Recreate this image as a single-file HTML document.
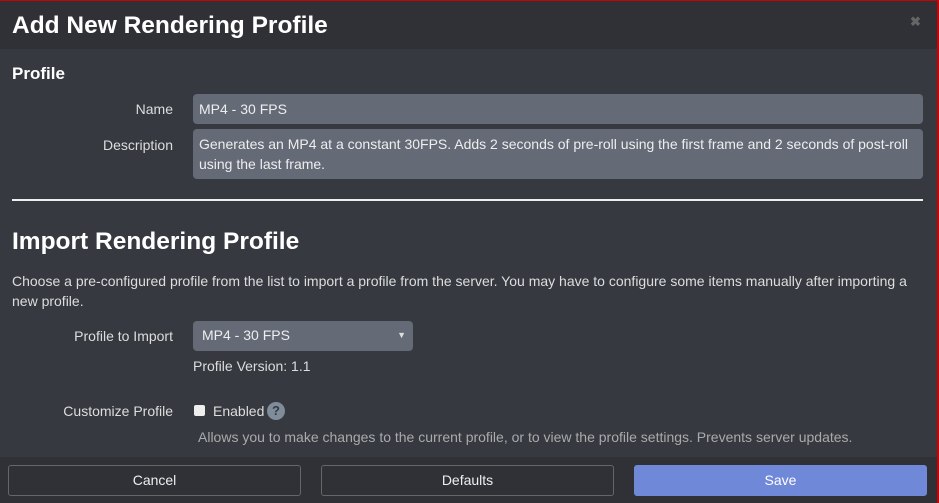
<!DOCTYPE html>
<html><head><style>
*{box-sizing:border-box;margin:0;padding:0}
body{width:939px;height:503px;overflow:hidden;background:#363940;font-family:"Liberation Sans",Arial,sans-serif;color:#ddd;position:relative}
.frame{position:absolute;left:0;top:0;width:939px;height:503px;border-top:1px solid #c00;border-right:2px solid #c00;pointer-events:none;z-index:5}
.hdr{position:absolute;left:0;top:0;width:939px;height:49px;background:#2f3136}
.hdr h1{position:absolute;left:12px;top:12px;font-size:24.5px;font-weight:bold;color:#fff}
.x{position:absolute;left:910px;top:14px;color:#666;font-size:13px;font-weight:bold}
.abs{position:absolute}
.lbl{position:absolute;right:766px;font-size:14px;color:#ddd;text-align:right}
.inp{position:absolute;background:#646a76;border-radius:4px;color:#eee;font-size:14px;padding:0 6px}
.btn{position:absolute;top:465px;height:31px;border:1px solid #666;border-radius:3px;color:#eee;font-size:14px;text-align:center;line-height:29px}
</style></head><body>
<div class="frame"></div>
<div class="hdr"><h1>Add New Rendering Profile</h1><div class="x">✖</div></div>
<div class="abs" style="left:12px;top:64px;font-size:17px;font-weight:bold;color:#fff">Profile</div>
<div class="lbl" style="top:101px">Name</div>
<div class="inp" style="left:193px;top:94px;width:730px;height:30px;line-height:30px">MP4 - 30 FPS</div>
<div class="lbl" style="top:137px">Description</div>
<div class="inp" style="left:193px;top:129px;width:730px;height:50px;padding-top:5px;line-height:20px">Generates an MP4 at a constant 30FPS. Adds 2 seconds of pre-roll using the first frame and 2 seconds of post-roll using the last frame.</div>
<div class="abs" style="left:12px;top:199px;width:911px;height:2px;background:#eee"></div>
<div class="abs" style="left:12px;top:228px;font-size:24.5px;font-weight:bold;color:#fff">Import Rendering Profile</div>
<div class="abs" style="left:12px;top:271px;width:915px;font-size:14px;line-height:20px;color:#ddd">Choose a pre-configured profile from the list to import a profile from the server. You may have to configure some items manually after importing a new profile.</div>
<div class="lbl" style="top:328px">Profile to Import</div>
<div class="inp" style="left:193px;top:321px;width:220px;height:30px;line-height:29px;padding-left:9px">MP4 - 30 FPS<span style="position:absolute;right:7px;font-size:9px;color:#ddd">▼</span></div>
<div class="abs" style="left:193px;top:358px;font-size:14px;color:#ddd">Profile Version: 1.1</div>
<div class="lbl" style="top:403px">Customize Profile</div>
<div class="abs" style="left:194px;top:405px;width:11px;height:11px;background:#eee;border-radius:2px"></div>
<div class="abs" style="left:213px;top:403px;font-size:14px;color:#ddd">Enabled</div>
<div class="abs" style="left:267px;top:402px;width:18px;height:18px;border-radius:50%;background:#7f8c99;color:#363940;font-size:13px;font-weight:bold;text-align:center;line-height:18px">?</div>
<div class="abs" style="left:198px;top:429px;font-size:14px;color:#aaa">Allows you to make changes to the current profile, or to view the profile settings. Prevents server updates.</div>
<div class="abs" style="left:0;top:457px;width:939px;height:46px;background:#2f3136"></div>
<div class="btn" style="left:8px;width:293px">Cancel</div>
<div class="btn" style="left:321px;width:293px">Defaults</div>
<div class="btn" style="left:634px;width:293px;background:#6f88d8;border-color:#6f88d8;color:#fff">Save</div>
</body></html>
